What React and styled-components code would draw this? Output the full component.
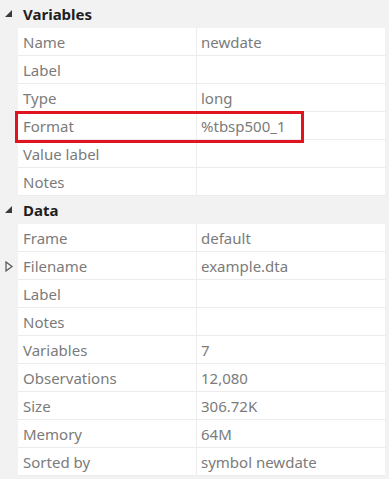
import React from "react";
import styled, { createGlobalStyle } from "styled-components";

const Global = createGlobalStyle`
  html, body { margin: 0; padding: 0; background: #f2f2f2; }
  body { font-family: "Noto Sans", "Open Sans", sans-serif; }
`;

const Panel = styled.div`
  width: 389px;
  height: 479px;
  background: #f2f2f2;
  overflow: hidden;
  position: relative;
`;

const Header = styled.div`
  height: 28px;
  display: flex;
  align-items: center;
  font-size: 15px;
  font-weight: 700;
  color: #1e1e1e;
`;

const Gutter = styled.div`
  width: 18px;
  height: 28px;
  flex: none;
  display: flex;
  align-items: center;
  justify-content: center;
`;

const HeaderText = styled.span`
  padding-left: 5px;
`;

const Row = styled.div`
  display: flex;
  height: 28px;
  align-items: stretch;
`;

const Cells = styled.div`
  flex: 1;
  display: grid;
  grid-template-columns: 179px 1fr;
  background: #fff;
  border-bottom: 1px solid #ececec;
  margin-right: 4px;
  box-sizing: border-box;
`;

const Cell = styled.div`
  display: flex;
  align-items: center;
  padding-left: ${(p) => (p.$value ? "4px" : "5px")};
  border-right: ${(p) => (p.$value ? "none" : "1px solid #ececec")};
  font-size: 15px;
  color: #7b7b7b;
  white-space: nowrap;
`;

const Highlight = styled.div`
  position: absolute;
  left: 15px;
  top: 111px;
  width: 283px;
  height: 26px;
  border: 3px solid #e0141e;
  pointer-events: none;
`;

const Expanded = () => (
  <svg width="8" height="8" viewBox="0 0 8 8">
    <polygon points="7,0 7,7 0,7" fill="#3a3a3a" />
  </svg>
);

const Collapsed = () => (
  <svg width="8" height="11" viewBox="0 0 8 11">
    <polygon points="1,1 7,5.5 1,10" fill="none" stroke="#555" strokeWidth="1.2" />
  </svg>
);

const variables = [
  ["Name", "newdate"],
  ["Label", ""],
  ["Type", "long"],
  ["Format", "%tbsp500_1"],
  ["Value label", ""],
  ["Notes", ""],
];

const data = [
  ["Frame", "default"],
  ["Filename", "example.dta", true],
  ["Label", ""],
  ["Notes", ""],
  ["Variables", "7"],
  ["Observations", "12,080"],
  ["Size", "306.72K"],
  ["Memory", "64M"],
  ["Sorted by", "symbol newdate"],
];

const PropRow = ({ name, value, expandable }) => (
  <Row>
    <Gutter>{expandable && <Collapsed />}</Gutter>
    <Cells>
      <Cell>{name}</Cell>
      <Cell $value>{value}</Cell>
    </Cells>
  </Row>
);

const Section = ({ title, rows }) => (
  <>
    <Header>
      <Gutter>
        <Expanded />
      </Gutter>
      <HeaderText>{title}</HeaderText>
    </Header>
    {rows.map(([n, v, e]) => (
      <PropRow key={title + n} name={n} value={v} expandable={e} />
    ))}
  </>
);

export default function App() {
  return (
    <Panel>
      <Global />
      <Section title="Variables" rows={variables} />
      <Section title="Data" rows={data} />
      <Highlight />
    </Panel>
  );
}
